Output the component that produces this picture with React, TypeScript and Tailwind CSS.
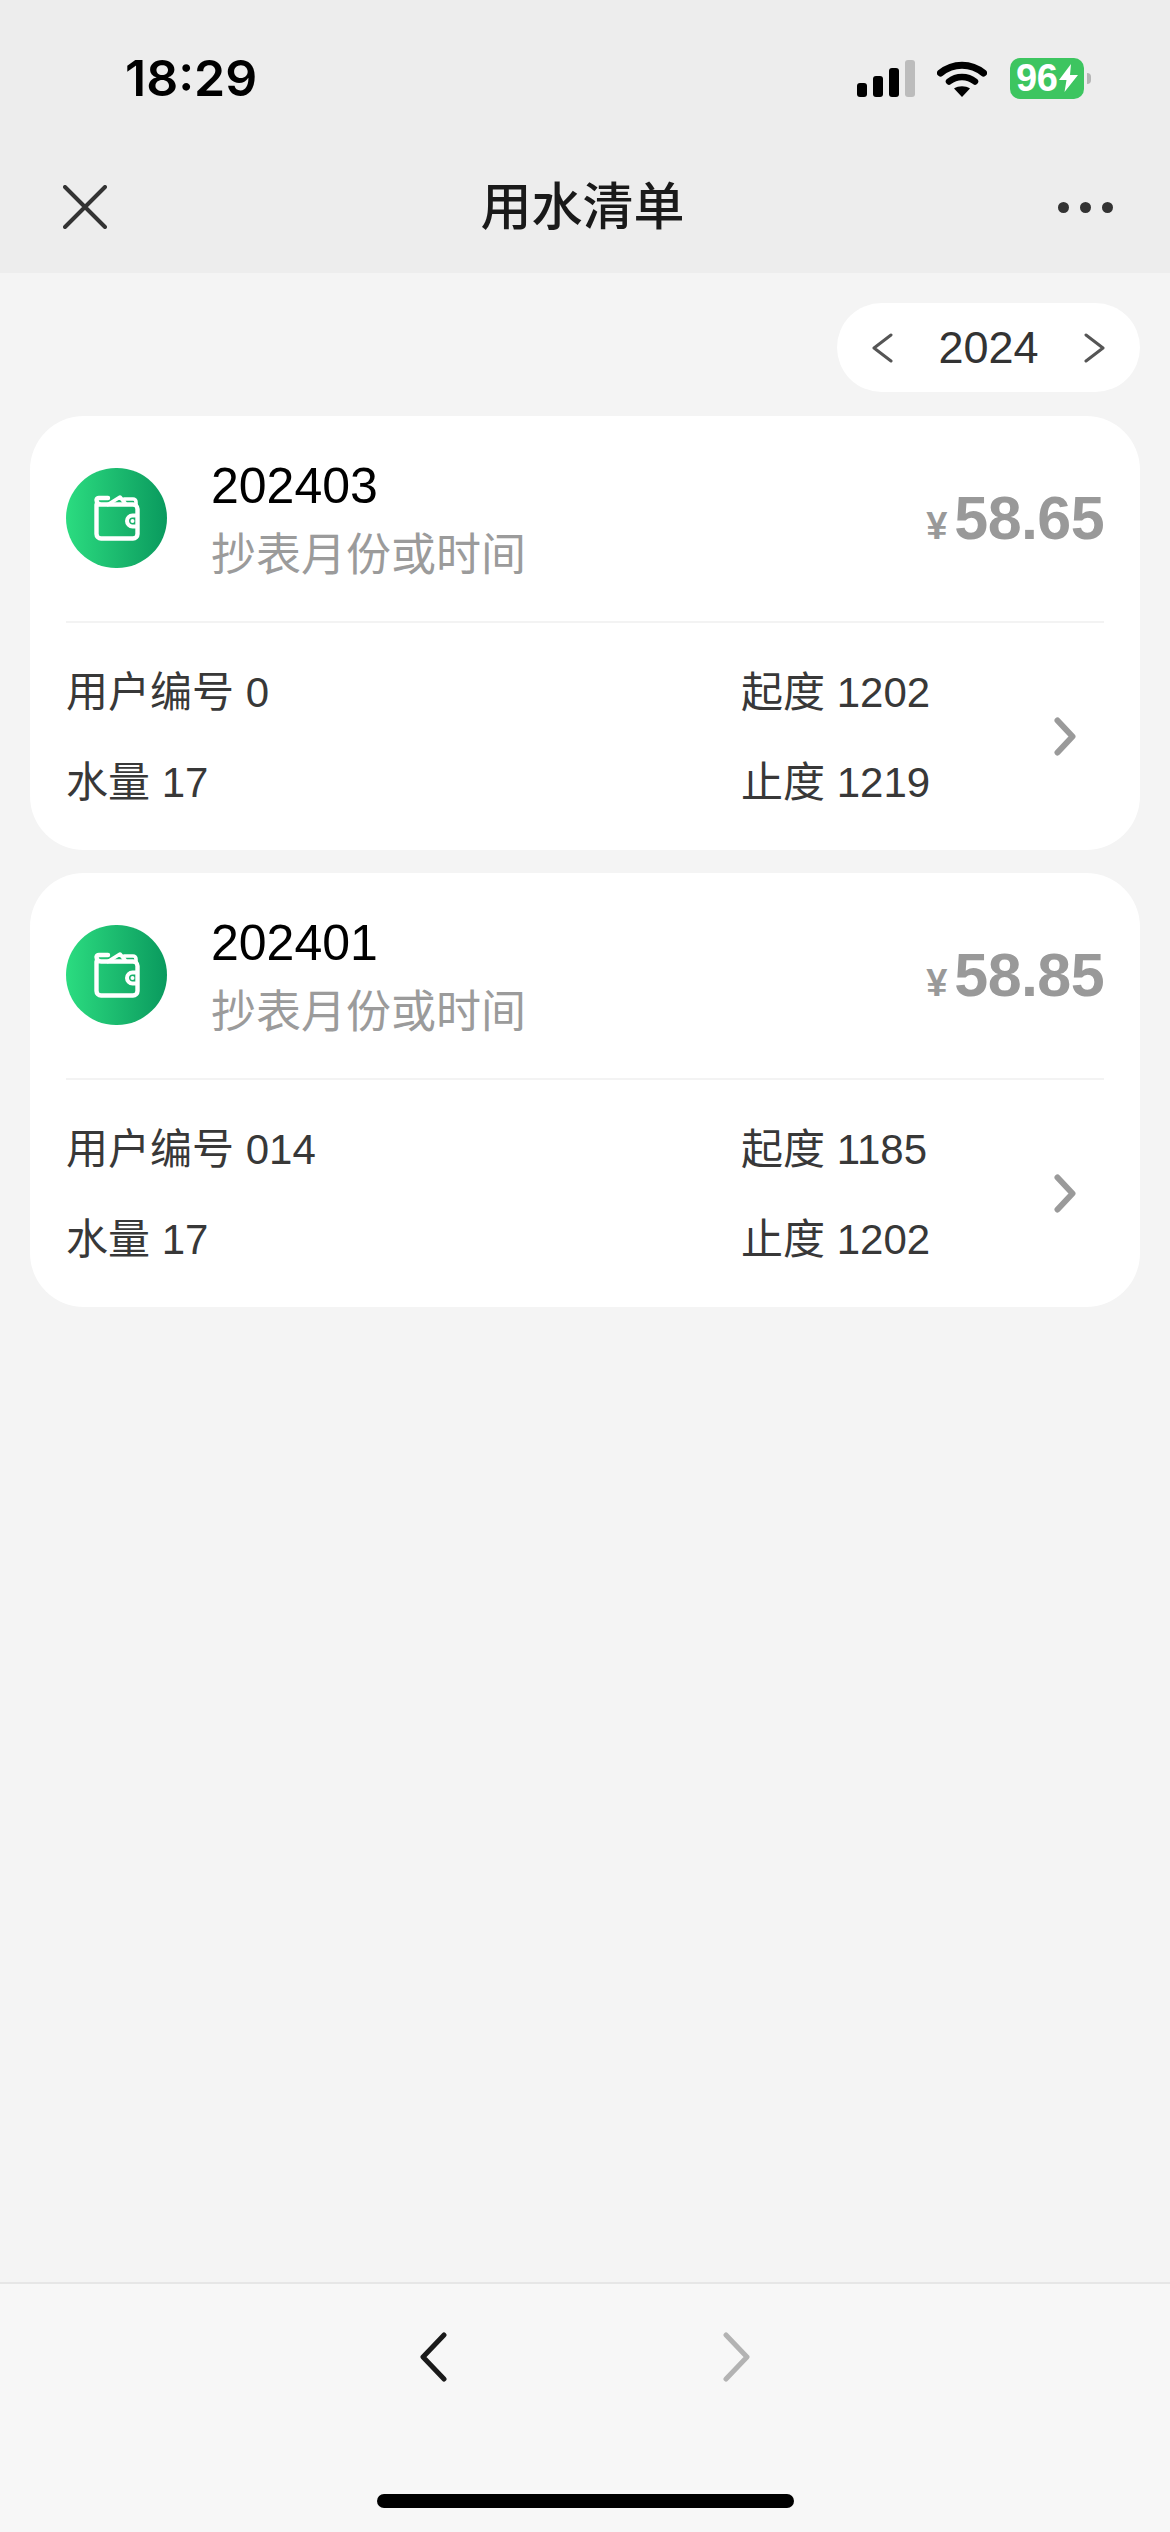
const font = { fontFamily: '"Liberation Sans", "Noto Sans CJK SC", sans-serif' };

function Chevron({ dir, w, h, sw, color }: { dir: "l" | "r"; w: number; h: number; sw: number; color: string }) {
  const p = sw / 2 + 0.5;
  const d = dir === "l" ? `M${w - p} ${p}L${p} ${h / 2}L${w - p} ${h - p}` : `M${p} ${p}L${w - p} ${h / 2}L${p} ${h - p}`;
  return (
    <svg width={w} height={h} viewBox={`0 0 ${w} ${h}`} className="shrink-0" fill="none">
      <path d={d} stroke={color} strokeWidth={sw} strokeLinecap="round" strokeLinejoin="round" />
    </svg>
  );
}

function Wallet() {
  return (
    <svg width="46" height="46" viewBox="0 0 46 46" fill="none">
      <path d="M2.500 9.500V39a4.500 4.500 0 0 0 4.500 4.500h32a4.500 4.500 0 0 0 4.500-4.500V14a4.500 4.500 0 0 0-4.500-4.500H7a4.500 4.500 0 0 1-4.500-4.500A2.500 2.500 0 0 1 5 3h9" stroke="#fff" strokeWidth="4.400" strokeLinecap="round" strokeLinejoin="round" />
      <path d="M14 9.500 26 2l5 6M30 4h9a3 3 0 0 1 3 3v3" stroke="#fff" strokeWidth="3.600" strokeLinejoin="round" strokeLinecap="round" />
      <path d="M43.500 20.500h-5a5.500 5.500 0 0 0 0 11h5" stroke="#fff" strokeWidth="4" />
      <circle cx="38.500" cy="26" r="2" fill="#fff" />
    </svg>
  );
}

function Card({ month, amount, user, start, end }: { month: string; amount: string; user: string; start: string; end: string }) {
  return (
    <div className="h-[434px] rounded-[54px] bg-white">
      <div className="flex h-[205px] items-center pl-[36px] pr-[36px]">
        <div className="mb-[2px] flex h-[100px] w-[101px] shrink-0 items-center justify-center rounded-full bg-gradient-to-r from-[#2bdc80] to-[#099a5e]">
          <Wallet />
        </div>
        <div className="ml-[44px] flex-1 pt-[5px]">
          <div className="text-[50px] leading-[58px] text-black">{month}</div>
          <div className="mt-[12px] text-[45px] leading-[58px] text-[#9b9b9b]">抄表月份或时间</div>
        </div>
        <div className="flex items-baseline text-[#999999]">
          <span className="mr-[7px] text-[38px] font-bold leading-none">¥</span>
          <span className="text-[61px] font-bold leading-none tracking-[-0.6px]">{amount}</span>
        </div>
      </div>
      <div className="mx-[36px] h-[2px] bg-[#f3f3f3]" />
      <div className="flex h-[227px] items-center pl-[36px] pr-[64px] text-[42px] text-[#383838]">
        <div className="w-[675px] shrink-0">
          <div className="flex h-[90px] items-center pt-[2px]">用户编号 {user}</div>
          <div className="flex h-[90px] items-center pt-[2px]">水量 17</div>
        </div>
        <div className="flex-1">
          <div className="flex h-[90px] items-center pt-[2px]">起度 {start}</div>
          <div className="flex h-[90px] items-center pt-[2px]">止度 {end}</div>
        </div>
        <Chevron dir="r" w={22} h={39} sw={6} color="#9a9a9a" />
      </div>
    </div>
  );
}

export default function App() {
  return (
    <div className="flex h-[2532px] w-[1170px] flex-col overflow-hidden bg-[#f4f4f4]" style={font}>
      <header className="h-[273px] shrink-0 bg-[#ededed]">
        <div className="flex h-[156px] items-center pl-[125px] pr-[79px]">
          <span className="flex-1 text-[50px] font-semibold leading-none text-black" style={{ fontFamily: 'Inter, "Liberation Sans", sans-serif' }}>18:29</span>
          <div className="flex items-end gap-[6px]">
            <div className="h-[14px] w-[10px] rounded-[3px] bg-black" />
            <div className="h-[21px] w-[10px] rounded-[3px] bg-black" />
            <div className="h-[29px] w-[10px] rounded-[3px] bg-black" />
            <div className="h-[37px] w-[10px] rounded-[3px] bg-[#bcbcbc]" />
          </div>
          <svg width="50" height="37" viewBox="0 0 50 37" className="ml-[22px]" fill="none">
            <path d="M3.500 13C16 2.500 34 2.500 46.500 13" stroke="#000" strokeWidth="7" strokeLinecap="round" />
            <path d="M12 21.500C19.500 15.500 30.500 15.500 38 21.500" stroke="#000" strokeWidth="6.500" strokeLinecap="round" />
            <path d="M17 28.500C21.500 25.500 28.500 25.500 33 28.500L25 37Z" fill="#000" />
          </svg>
          <div className="ml-[23px] flex items-center">
            <div className="flex h-[41px] w-[74px] items-center overflow-hidden rounded-[10px] bg-[#3dc560] pl-[6px] text-white">
              <span className="text-[38px] font-bold leading-none tracking-[-0.5px]">96</span>
              <svg width="19" height="28" viewBox="0 0 19 28" className="ml-[2px] shrink-0" fill="#fff">
                <path d="M12 0 0 16h7.500L5.500 28 19 11h-8z" />
              </svg>
            </div>
            <div className="ml-[3px] h-[11px] w-[4px] rounded-r-full bg-[#b5b5b5]" />
          </div>
        </div>
        <div className="flex h-[117px] items-center pb-[15px] pl-[63px] pr-[57px]">
          <svg width="44" height="44" viewBox="0 0 44 44" fill="none">
            <path d="M2 2 42 42M42 2 2 42" stroke="#333" strokeWidth="4" strokeLinecap="round" />
          </svg>
          <div className="flex-1 text-center text-[51px] font-medium leading-none text-[#1a1a1a]">用水清单</div>
          <div className="flex gap-[11px]">
            <div className="size-[11px] rounded-full bg-[#333]" />
            <div className="size-[11px] rounded-full bg-[#333]" />
            <div className="size-[11px] rounded-full bg-[#333]" />
          </div>
        </div>
      </header>

      <main className="flex-1 px-[30px] pt-[30px]">
        <div className="flex justify-end">
          <div className="flex h-[89px] w-[303px] items-center justify-between rounded-[45px] bg-white pl-[35px] pr-[35px] text-[45px] text-[#333]">
            <Chevron dir="l" w={21} h={30} sw={3} color="#555" />
            <span className="leading-none">2024</span>
            <Chevron dir="r" w={21} h={30} sw={3} color="#555" />
          </div>
        </div>
        <div className="mt-[24px] flex flex-col gap-[23px]">
          <Card month="202403" amount="58.65" user="0" start="1202" end="1219" />
          <Card month="202401" amount="58.85" user="014" start="1185" end="1202" />
        </div>
      </main>

      <footer className="h-[250px] shrink-0 border-t-2 border-[#e6e6e6] bg-[#f7f7f7]">
        <div className="flex h-[196px] items-start justify-center gap-[276px] pt-[48px] pr-[1px]">
          <Chevron dir="l" w={27} h={50} sw={5} color="#1a1a1a" />
          <Chevron dir="r" w={27} h={50} sw={5} color="#b3b3b3" />
        </div>
        <div className="mx-auto mt-[14px] h-[14px] w-[417px] rounded-full bg-black" />
      </footer>
    </div>
  );
}
